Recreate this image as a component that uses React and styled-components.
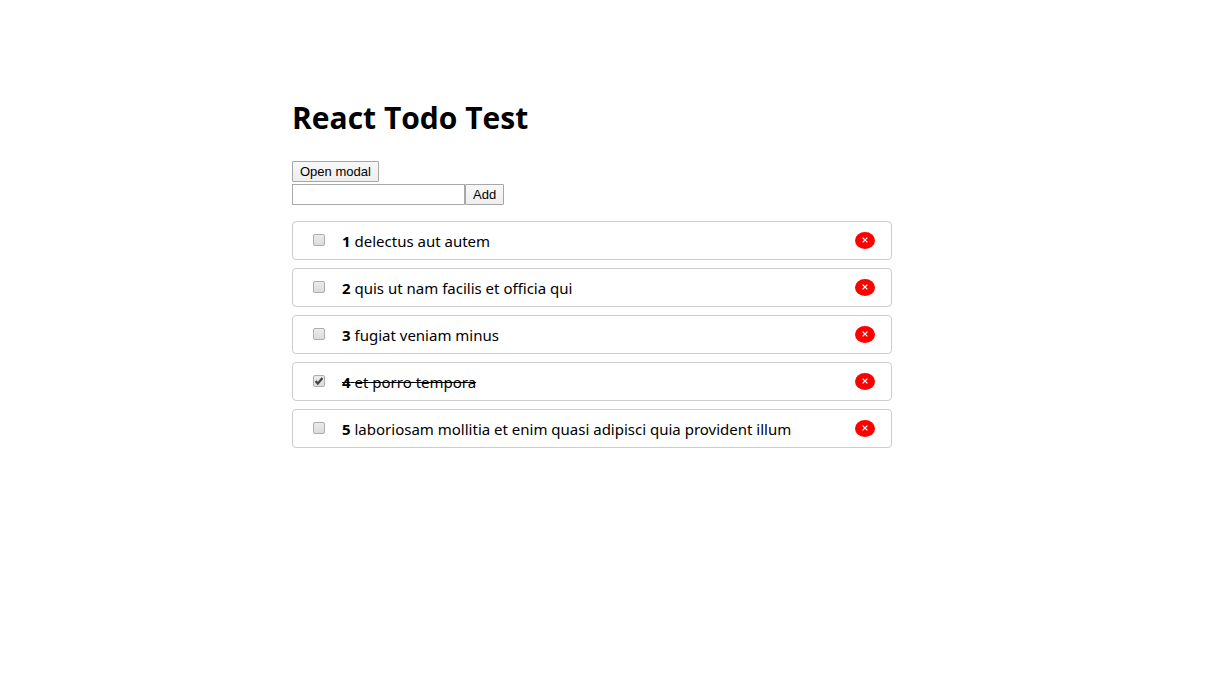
import React, { useState } from "react";
import styled, { createGlobalStyle } from "styled-components";

const GlobalStyle = createGlobalStyle`
  *, *::before, *::after { box-sizing: border-box; }
  body {
    margin: 0;
    background: #fff;
    color: #000;
    font-family: "Noto Sans", "Open Sans", sans-serif;
    font-size: 15px;
    line-height: 21px;
  }
`;

const Page = styled.div`
  padding: 96px 45px 40px 0;
`;

const Container = styled.main`
  max-width: 600px;
  margin: 0 auto;
`;

const Title = styled.h1`
  margin: 0 0 21px;
  font-family: "Open Sans", "Noto Sans", sans-serif;
  font-size: 30px;
  line-height: 44px;
  font-weight: 700;
`;

const Button = styled.button`
  height: 21px;
  padding: 0 7px;
  border: 1px solid #a6a6a6;
  border-radius: 1px;
  background: linear-gradient(#f8f8f8, #eee);
  color: #000;
  font-family: "Liberation Sans", Arial, sans-serif;
  font-size: 13px;
  line-height: 19px;
  white-space: nowrap;
`;

const Toolbar = styled.div`
  display: flex;
  margin-bottom: 2px;
`;

const AddForm = styled.form`
  display: flex;
  margin-bottom: 16px;
`;

const TextField = styled.input`
  width: 173px;
  height: 21px;
  padding: 1px;
  border: 1px solid #a9a9a9;
  border-radius: 0;
  background: #fff;
  font-family: "Liberation Sans", Arial, sans-serif;
  font-size: 13px;
`;

const List = styled.ul`
  display: flex;
  flex-direction: column;
  gap: 8px;
  margin: 0;
  padding: 0;
  list-style: none;
`;

const Item = styled.li`
  display: flex;
  align-items: center;
  padding: 7px 16px 7px 20px;
  border: 1px solid #ccc;
  border-radius: 4px;
`;

const Label = styled.label`
  display: flex;
  flex: 1;
  align-items: center;
  gap: 17px;
`;

const CheckFrame = styled.span`
  position: relative;
  display: block;
  width: 12px;
  height: 12px;
  margin-bottom: 2px;
`;

const Checkbox = styled.input`
  appearance: none;
  display: block;
  width: 12px;
  height: 12px;
  margin: 0;
  border: 1px solid #adadad;
  border-radius: 2px;
  background: linear-gradient(#ebebeb, #dcdcdc);
`;

const Tick = styled.svg`
  position: absolute;
  inset: 0;
  width: 12px;
  height: 12px;
  pointer-events: none;
`;

const Text = styled.span`
  padding-top: 2px;
  text-decoration: ${(p) => (p.$done ? "line-through" : "none")};
`;

const DeleteButton = styled.button`
  display: flex;
  align-items: center;
  justify-content: center;
  width: 20px;
  height: 17px;
  margin-bottom: 1px;
  padding: 0;
  border: 0;
  border-radius: 50%;
  background: #f00;
  color: #fff;
`;

const initialTodos = [
  { id: 1, title: "delectus aut autem", done: false },
  { id: 2, title: "quis ut nam facilis et officia qui", done: false },
  { id: 3, title: "fugiat veniam minus", done: false },
  { id: 4, title: "et porro tempora", done: true },
  {
    id: 5,
    title: "laboriosam mollitia et enim quasi adipisci quia provident illum",
    done: false,
  },
];

function TodoItem({ todo, onToggle, onDelete }) {
  return (
    <Item>
      <Label>
        <CheckFrame>
          <Checkbox type="checkbox" checked={todo.done} onChange={onToggle} />
          {todo.done && (
            <Tick viewBox="0 0 12 12" aria-hidden="true">
              <path d="M2.6 6.1 L4.8 8.6 L9.4 3" fill="none" stroke="#404040" strokeWidth="2.2" />
            </Tick>
          )}
        </CheckFrame>
        <Text $done={todo.done}>
          <strong>{todo.id}</strong> {todo.title}
        </Text>
      </Label>
      <DeleteButton type="button" aria-label={`Delete ${todo.title}`} onClick={onDelete}>
        <svg width="6" height="6" viewBox="0 0 6 6" aria-hidden="true">
          <path d="M0.6 0.6 L5.4 5.4 M5.4 0.6 L0.6 5.4" stroke="#fff" strokeWidth="1.3" />
        </svg>
      </DeleteButton>
    </Item>
  );
}

export default function App() {
  const [todos, setTodos] = useState(initialTodos);
  const [draft, setDraft] = useState("");

  const addTodo = (event) => {
    event.preventDefault();
    const title = draft.trim();
    if (!title) return;
    const id = todos.reduce((max, t) => Math.max(max, t.id), 0) + 1;
    setTodos([...todos, { id, title, done: false }]);
    setDraft("");
  };

  const toggle = (id) =>
    setTodos(todos.map((t) => (t.id === id ? { ...t, done: !t.done } : t)));

  return (
    <>
      <GlobalStyle />
      <Page>
        <Container>
          <Title>React Todo Test</Title>
          <Toolbar>
            <Button type="button">Open modal</Button>
          </Toolbar>
          <AddForm onSubmit={addTodo}>
            <TextField
              type="text"
              aria-label="New todo"
              value={draft}
              onChange={(e) => setDraft(e.target.value)}
            />
            <Button type="submit">Add</Button>
          </AddForm>
          <List>
            {todos.map((todo) => (
              <TodoItem
                key={todo.id}
                todo={todo}
                onToggle={() => toggle(todo.id)}
                onDelete={() => setTodos(todos.filter((t) => t.id !== todo.id))}
              />
            ))}
          </List>
        </Container>
      </Page>
    </>
  );
}
